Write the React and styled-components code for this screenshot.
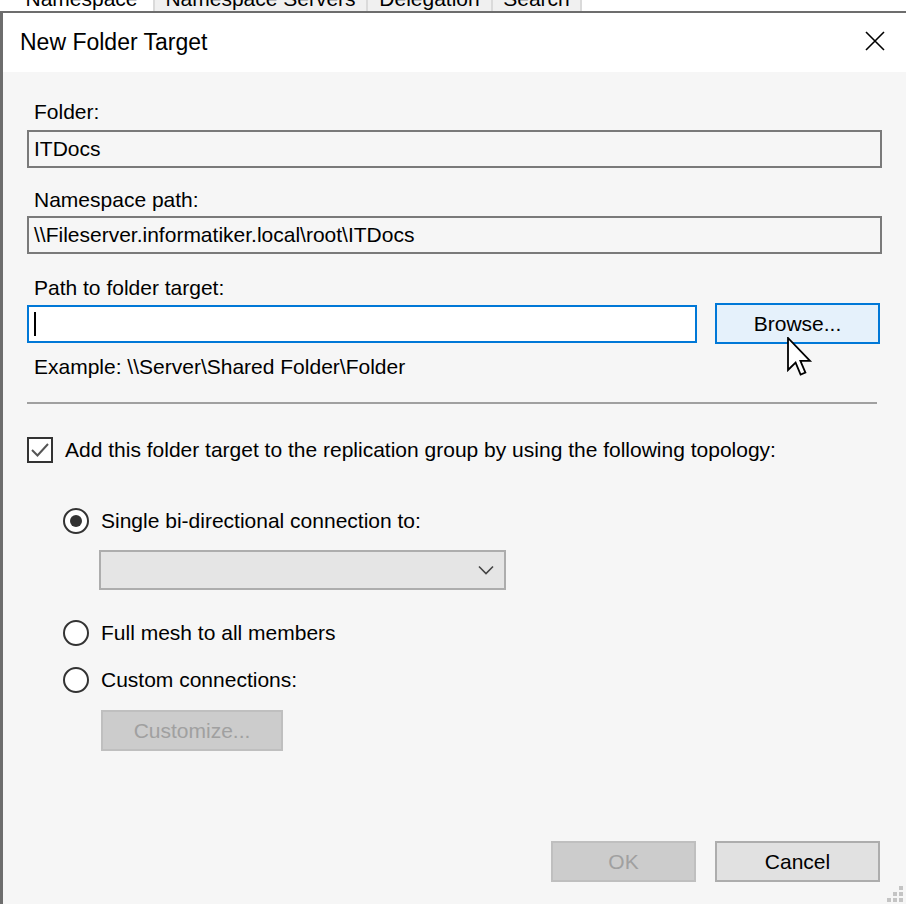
import React from "react";
import styled, { createGlobalStyle } from "styled-components";

const GlobalStyle = createGlobalStyle`
	html, body {
		margin: 0;
		padding: 0;
		background: #ffffff;
	}
	body {
		font-family: "Liberation Sans", Arial, sans-serif;
		color: #000;
	}
`;

// Page shell
const Page = styled.div`
	position: relative;
	width: 906px;
	height: 904px;
	display: flex;
	flex-direction: column;
	overflow: hidden;
	font-size: 21px;
`;

// Tabs of the window behind, only their bottoms show
const TabStrip = styled.div`
	height: 11px;
	flex: none;
	display: flex;
	padding-left: 10px;
	overflow: hidden;
	background: #ffffff;
`;

const Tab = styled.div`
	width: ${(p) => p.$w}px;
	flex: none;
	border-right: 2px solid #dadada;
	background: ${(p) => (p.$active ? "#ffffff" : "#f0f0f0")};
	text-align: center;
	line-height: 24px;
	margin-top: -13px;
	height: 26px;
	white-space: nowrap;
`;

const Window = styled.div`
	flex: 1;
	display: flex;
	flex-direction: column;
	border-top: 2px solid #6d6d6d;
	border-left: 3px solid #6d6d6d;
	background: #f6f6f6;
`;

const TitleBar = styled.div`
	height: 59px;
	flex: none;
	display: flex;
	align-items: center;
	justify-content: space-between;
	background: #ffffff;
	padding: 0 19px 0 17px;
	font-size: 23px;
`;

const CloseButton = styled.div`
	width: 24px;
	height: 24px;
	display: flex;
	align-items: center;
	justify-content: center;
	margin-top: -4px;
`;

const Body = styled.div`
	flex: 1;
	display: flex;
	flex-direction: column;
	padding: 28px 24px 22px 24px;
`;

const Label = styled.div`
	height: 24px;
	line-height: 24px;
	padding-left: 7px;
	margin-top: ${(p) => p.$top || 0}px;
	white-space: nowrap;
`;

const ReadOnlyBox = styled.div`
	height: 38px;
	box-sizing: border-box;
	margin-top: ${(p) => p.$top || 0}px;
	border: 2px solid #7a7a7a;
	background: #f6f6f6;
	padding-left: 5px;
	display: flex;
	align-items: center;
	white-space: nowrap;
`;

const InputRow = styled.div`
	display: flex;
	align-items: center;
	gap: 18px;
	margin-top: 3px;
	margin-right: 2px;
`;

const TextInput = styled.div`
	width: 670px;
	height: 38px;
	box-sizing: border-box;
	border: 2px solid #0078d7;
	background: #ffffff;
	display: flex;
	align-items: center;
	padding-left: 5px;
`;

const Caret = styled.span`
	width: 2px;
	height: 24px;
	background: #000;
`;

const Button = styled.div`
	width: ${(p) => p.$w}px;
	height: 41px;
	box-sizing: border-box;
	flex: none;
	display: flex;
	align-items: center;
	justify-content: center;
	border: 2px solid ${(p) => (p.$focus ? "#0078d7" : p.$disabled ? "#bfbfbf" : "#adadad")};
	background: ${(p) => (p.$focus ? "#e5f1fb" : p.$disabled ? "#cccccc" : "#e1e1e1")};
	color: ${(p) => (p.$disabled ? "#a0a0a0" : "#000")};
	margin-left: ${(p) => p.$left || 0}px;
`;

const Separator = styled.div`
	height: 2px;
	background: #a0a0a0;
	margin: 23px 5px 0 0;
`;

const CheckRow = styled.div`
	display: flex;
	align-items: center;
	gap: 12px;
	margin-top: 33px;
	white-space: nowrap;
`;

const CheckBox = styled.div`
	width: 26px;
	height: 26px;
	box-sizing: border-box;
	border: 2px solid #333333;
	background: #ffffff;
	display: flex;
	align-items: center;
	justify-content: center;
`;

const RadioRow = styled.div`
	display: flex;
	align-items: center;
	gap: 12px;
	padding-left: 36px;
	margin-top: ${(p) => p.$top}px;
	white-space: nowrap;
`;

const Radio = styled.div`
	width: 26px;
	height: 26px;
	box-sizing: border-box;
	border-radius: 50%;
	border: 2px solid #333333;
	background: #ffffff;
	display: flex;
	align-items: center;
	justify-content: center;

	&::after {
		content: "";
		display: ${(p) => (p.$checked ? "block" : "none")};
		width: 12px;
		height: 12px;
		border-radius: 50%;
		background: #333333;
	}
`;

const Indented = styled.div`
	padding-left: ${(p) => p.$left}px;
	margin-top: ${(p) => p.$top}px;
	display: flex;
`;

const Select = styled.div`
	width: 407px;
	height: 40px;
	box-sizing: border-box;
	border: 2px solid #adadad;
	background: #e5e5e5;
	display: flex;
	align-items: center;
	justify-content: flex-end;
	padding-right: 10px;
`;

const Footer = styled.div`
	margin-top: auto;
	display: flex;
	justify-content: flex-end;
	margin-right: 2px;
`;

const Cursor = styled.svg`
	position: absolute;
	left: 787px;
	top: 337px;
`;

const Grip = styled.svg`
	position: absolute;
	right: 1px;
	bottom: 0;
`;

function App() {
	return (
		<Page>
			<GlobalStyle />
			<TabStrip>
				<Tab $w={143} $active>Namespace</Tab>
				<Tab $w={211}>Namespace Servers</Tab>
				<Tab $w={123}>Delegation</Tab>
				<Tab $w={87}>Search</Tab>
			</TabStrip>
			<Window>
				<TitleBar>
					<span>New Folder Target</span>
					<CloseButton>
						<svg width="22" height="22" viewBox="0 0 22 22">
							<path d="M2 2 L20 20 M20 2 L2 20" stroke="#000" strokeWidth="1.6" />
						</svg>
					</CloseButton>
				</TitleBar>
				<Body>
					<Label>Folder:</Label>
					<ReadOnlyBox $top={6}>ITDocs</ReadOnlyBox>
					<Label $top={20}>Namespace path:</Label>
					<ReadOnlyBox $top={4}>\\Fileserver.informatiker.local\root\ITDocs</ReadOnlyBox>
					<Label $top={22}>Path to folder target:</Label>
					<InputRow>
						<TextInput>
							<Caret />
						</TextInput>
						<Button $w={165} $focus>Browse...</Button>
					</InputRow>
					<Label $top={11}>Example: \\Server\Shared Folder\Folder</Label>
					<Separator />
					<CheckRow>
						<CheckBox>
							<svg width="20" height="20" viewBox="0 0 20 20">
								<path d="M2 10 L7.5 15.5 L18 4" fill="none" stroke="#555" strokeWidth="2" />
							</svg>
						</CheckBox>
						<span>Add this folder target to the replication group by using the following topology:</span>
					</CheckRow>
					<RadioRow $top={45}>
						<Radio $checked />
						<span>Single bi-directional connection to:</span>
					</RadioRow>
					<Indented $left={72} $top={16}>
						<Select>
							<svg width="16" height="10" viewBox="0 0 16 10">
								<path d="M1 1.5 L8 8.5 L15 1.5" fill="none" stroke="#444" strokeWidth="1.6" />
							</svg>
						</Select>
					</Indented>
					<RadioRow $top={30}>
						<Radio />
						<span>Full mesh to all members</span>
					</RadioRow>
					<RadioRow $top={21}>
						<Radio />
						<span>Custom connections:</span>
					</RadioRow>
					<Indented $left={74} $top={17}>
						<Button $w={182} $disabled>Customize...</Button>
					</Indented>
					<Footer>
						<Button $w={145} $disabled>OK</Button>
						<Button $w={165} $left={19}>Cancel</Button>
					</Footer>
				</Body>
			</Window>
			<Cursor width="26" height="42" viewBox="0 0 13 21">
				<path
					d="M0.5 0.5 L0.5 16.5 L4.3 12.8 L6.8 18.8 L9.2 17.8 L6.7 11.9 L11.5 11.9 Z"
					fill="#fff"
					stroke="#000"
					strokeWidth="0.9"
					strokeLinejoin="miter"
				/>
			</Cursor>
			<Grip width="20" height="18" viewBox="0 0 20 18">
				<rect x="14" y="0" width="4" height="4" fill="#c4c4c4" />
				<rect x="8" y="6" width="4" height="4" fill="#c4c4c4" />
				<rect x="14" y="6" width="4" height="4" fill="#c4c4c4" />
				<rect x="2" y="12" width="4" height="4" fill="#c4c4c4" />
				<rect x="8" y="12" width="4" height="4" fill="#c4c4c4" />
				<rect x="14" y="12" width="4" height="4" fill="#c4c4c4" />
			</Grip>
		</Page>
	);
}

export default App;
